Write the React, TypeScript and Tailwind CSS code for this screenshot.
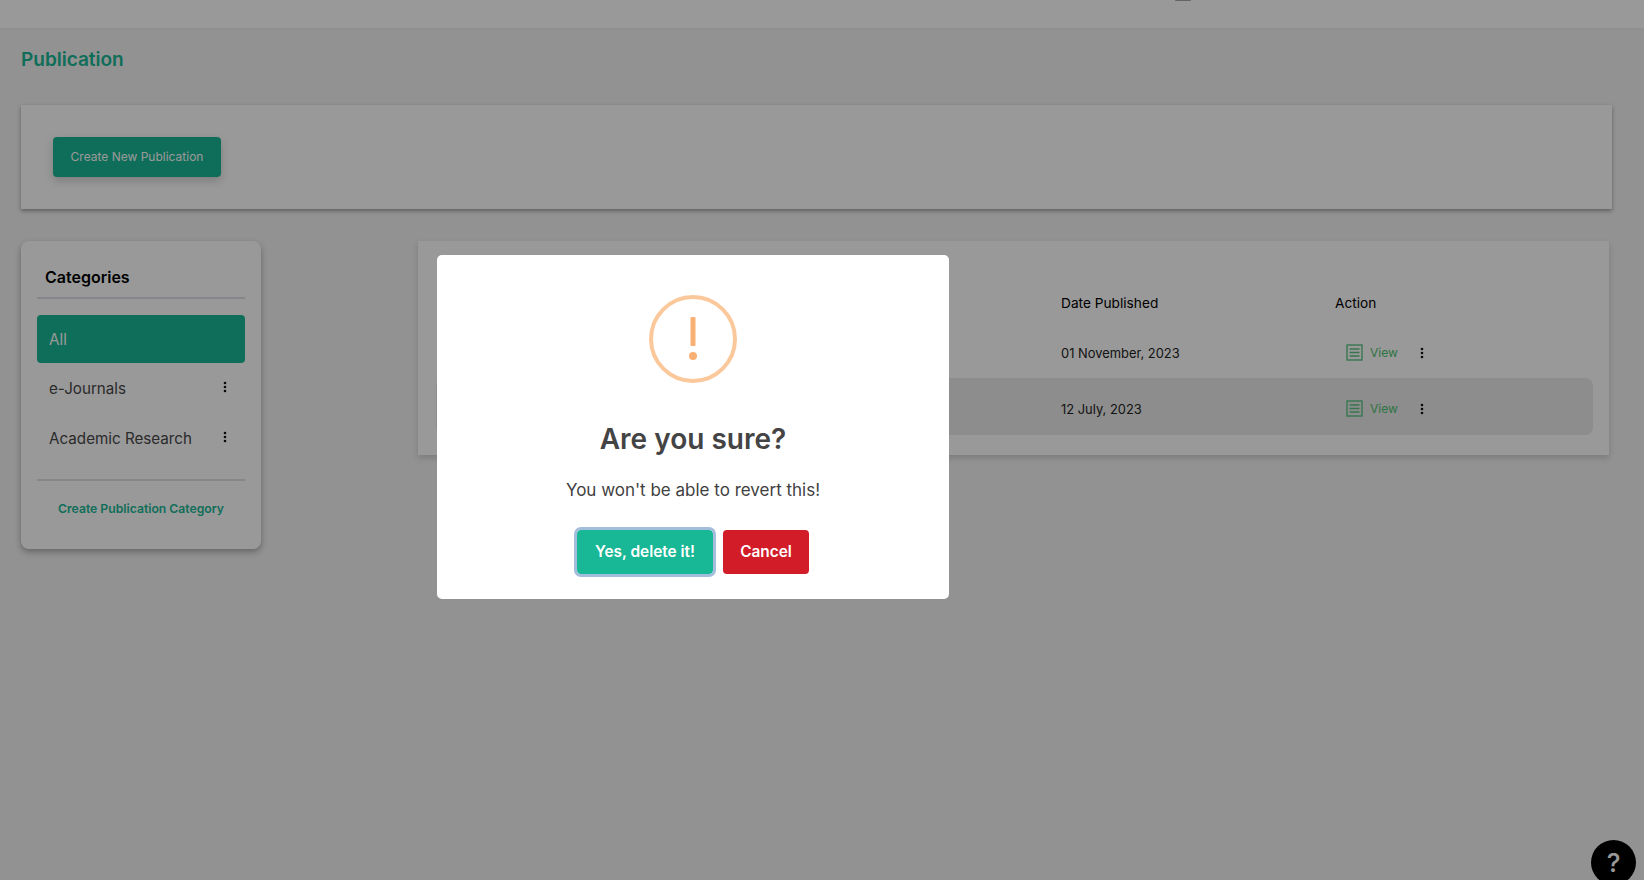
const FONT = "font-['Inter','Liberation_Sans',sans-serif]";

function Dots() {
  return (
    <svg width="4" height="12" viewBox="0 0 4 12" fill="#111" aria-hidden>
      <circle cx="2" cy="2" r="1.3" />
      <circle cx="2" cy="6" r="1.3" />
      <circle cx="2" cy="10" r="1.3" />
    </svg>
  );
}

function ViewIcon() {
  return (
    <svg width="17" height="17" viewBox="0 0 17 17" fill="none" stroke="#5cc486" strokeWidth="1.4" aria-hidden>
      <rect x="1" y="1" width="15" height="15" />
      <path d="M3.5 5H13.5M3.5 8.5H13.5M3.5 12H13.5" />
    </svg>
  );
}

function Row({ date, className }: { date: string; className: string }) {
  return (
    <div className={`grid grid-cols-[625px_274px_258px] items-center ${className}`}>
      <div />
      <div className="mt-[3px] text-[12.9px] text-[#222]">{date}</div>
      <div className="flex items-center pl-[11px]">
        <ViewIcon />
        <span className="ml-[7px] text-[12px] text-[#4cc073]">View</span>
        <span className="ml-[22px] flex"><Dots /></span>
      </div>
    </div>
  );
}

export default function App() {
  return (
    <div className={`${FONT} relative h-[880px] overflow-hidden bg-[#f3f3f3]`}>
      {/* top bar, page is scrolled so only the avatar's edge shows */}
      <div className="flex h-[28px] justify-center bg-white pl-[722px] shadow-[0_1px_2px_rgba(0,0,0,0.03)]">
        <div className="h-[1px] w-[16px] rounded-b-full bg-[#a5a5ae]" />
      </div>

      <main className="pl-[21px] pr-[32px] pt-[18px]">
        <h1 className="text-[19px] font-semibold leading-[28px] text-[#19b794]">Publication</h1>

        <section className="mt-[31px] bg-white p-[32px] shadow-[0_2px_4px_rgba(0,0,0,0.35)]">
          <button className="flex h-[40px] w-[168px] items-center justify-center rounded-[4px] bg-[#19b794] text-[12px] text-white shadow-[0_4px_10px_rgba(0,0,0,0.18)]">
            Create New Publication
          </button>
        </section>

        <div className="mt-[32px] flex items-start gap-[157px]">
          <aside className="h-[308px] w-[240px] rounded-[8px] bg-white px-[16px] shadow-[0_3px_6px_rgba(0,0,0,0.3)]">
            <h2 className="border-b-2 border-[#dedee6] pb-[8px] pl-[8px] pt-[24px] text-[16px] font-semibold leading-[24px] text-black">
              Categories
            </h2>
            <div className="mt-[16px] flex h-[48px] items-center rounded-[4px] bg-[#19b794] pl-[12px] pt-[2px] text-[15.2px] text-white">
              All
            </div>
            <div className="flex h-[50px] items-center justify-between pl-[12px] pr-[18px] pt-[2px] text-[15.2px] text-[#484848]">
              e-Journals
              <span className="mb-[4px] flex"><Dots /></span>
            </div>
            <div className="flex h-[50px] items-center justify-between pl-[12px] pr-[18px] pt-[2px] text-[15.2px] text-[#484848]">
              Academic Research
              <span className="mb-[4px] flex"><Dots /></span>
            </div>
            <div className="mt-[16px] border-t-2 border-[#dedee6] pt-[20px] text-center text-[12.2px] font-semibold leading-[16px] text-[#19b794]">
              Create Publication Category
            </div>
          </aside>

          <section className="h-[214px] w-[1191px] bg-white pl-[18px] pr-[16px] shadow-[0_3px_6px_rgba(0,0,0,0.15)]">
            <div className="mt-[38px] grid h-[48px] grid-cols-[625px_274px_258px] items-center text-[13.7px] text-black">
              <div />
              <div>Date Published</div>
              <div>Action</div>
            </div>
            <Row date="01 November, 2023" className="h-[51px]" />
            <Row date="12 July, 2023" className="h-[57px] rounded-[8px] bg-[#ebebeb] pt-[4px]" />
          </section>
        </div>
      </main>

      <button className="fixed bottom-[-5px] right-[8px] flex h-[45px] w-[45px] items-center justify-center rounded-full bg-black text-[26px] font-medium text-white">
        ?
      </button>

      {/* confirm dialog over the dimmed page */}
      <div className="fixed inset-0 bg-black/40 pl-[437px] pt-[255px]">
        <div className="flex h-[344px] w-[512px] flex-col items-center rounded-[5px] bg-white pt-[40px]">
          <div className="flex h-[88px] w-[88px] items-center justify-center rounded-full border-4 border-[#fbc89c]">
            <svg width="10" height="44" viewBox="0 0 10 44" fill="#f8b075" aria-hidden>
              <rect x="2.5" y="0" width="5" height="29" rx="1" />
              <circle cx="5" cy="39" r="4" />
            </svg>
          </div>
          <h2 className="mt-[34px] text-[28px] font-semibold leading-[44px] text-[#444]">Are you sure?</h2>
          <p className="mt-[16px] text-[17px] leading-[26px] text-[#3f3f3f]">You won't be able to revert this!</p>
          <div className="mt-[27px] flex gap-[10px]">
            <button className="flex h-[44px] w-[136px] items-center justify-center rounded-[4px] bg-[#18b795] text-[15.4px] font-semibold text-white outline-3 outline-[#a3bedc]">
              Yes, delete it!
            </button>
            <button className="flex h-[44px] w-[86px] items-center justify-center rounded-[4px] bg-[#d21c28] text-[15.4px] font-semibold text-white">
              Cancel
            </button>
          </div>
        </div>
      </div>
    </div>
  );
}
